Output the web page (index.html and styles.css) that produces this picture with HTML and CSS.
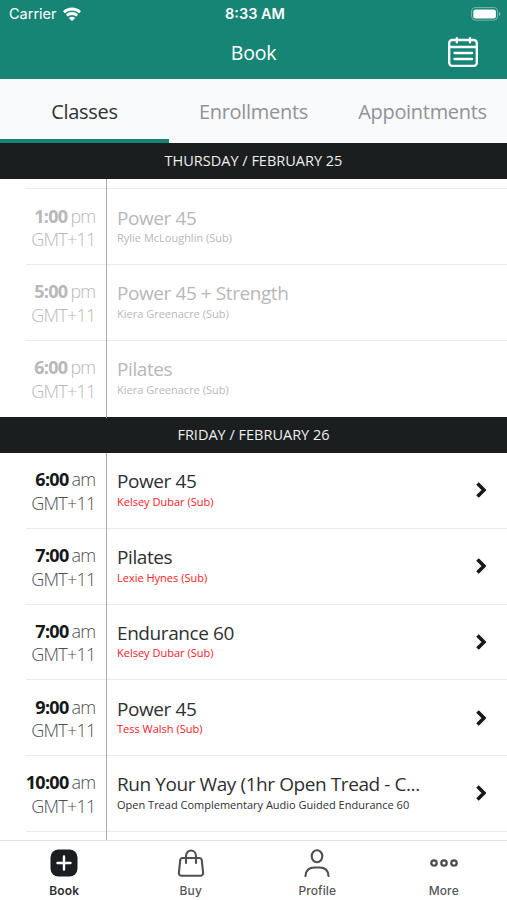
FILE: index.html
```
<!DOCTYPE html>
<html lang="en">
<head>
    <meta charset="UTF-8">
    <meta name="viewport" content="width=device-width, initial-scale=1.0">
    <title>Book</title>
    <link rel="stylesheet" href="styles.css">
</head>
<body>
    <div class="app">
        <header class="header">
            <div class="status-bar">
                <div class="carrier">
                    <span>Carrier</span>
                    <svg width="18" height="14" viewBox="0 0 18 14" fill="none" stroke="#fff" stroke-width="2.8">
                        <path d="M1 5.2C5.4.9 12.6.9 17 5.2"/>
                        <path d="M3.8 8.6c2.9-2.8 7.5-2.8 10.4 0"/>
                        <path d="M9 14L5.8 10.9c1.8-1.6 4.6-1.6 6.4 0z" fill="#fff" stroke="none"/>
                    </svg>
                </div>
                <span class="clock">8:33 AM</span>
                <svg class="battery" width="30" height="14" viewBox="0 0 30 14">
                    <rect x=".6" y=".6" width="26" height="12.6" rx="4" fill="none" stroke="#fff" stroke-opacity=".4"/>
                    <rect x="2.3" y="2.4" width="22.6" height="9" rx="2.2" fill="#fff"/>
                    <path d="M28 5v4c1.8-.7 1.8-3.3 0-4z" fill="#fff" fill-opacity=".5"/>
                </svg>
            </div>
            <div class="title-bar">
                <h1>Book</h1>
                <svg class="calendar" width="30" height="30" viewBox="0 0 30 30" fill="none" stroke="#fff" stroke-width="2.3" stroke-linecap="round">
                    <rect x="1.2" y="3" width="27.6" height="25.8" rx="3"/>
                    <path d="M1 10h28M8.8 1.2v4.2M22 1.2v4.2M6.5 16h17.6M6.5 22h17.6"/>
                </svg>
            </div>
        </header>

        <nav class="tabs">
            <a class="tab active">Classes</a>
            <a class="tab">Enrollments</a>
            <a class="tab">Appointments</a>
        </nav>

        <main class="schedule">
            <h2 class="day">THURSDAY / FEBRUARY 25</h2>
            <div class="past">
                <div class="row row-cut"><div class="time"></div></div>
                <div class="row">
                    <div class="time"><p><b>1:00</b> pm</p><p>GMT+11</p></div>
                    <div class="info"><h3>Power 45</h3><p>Rylie McLoughlin (Sub)</p></div>
                </div>
                <div class="row">
                    <div class="time"><p><b>5:00</b> pm</p><p>GMT+11</p></div>
                    <div class="info"><h3>Power 45 + Strength</h3><p>Kiera Greenacre (Sub)</p></div>
                </div>
                <div class="row">
                    <div class="time"><p><b>6:00</b> pm</p><p>GMT+11</p></div>
                    <div class="info"><h3>Pilates</h3><p>Kiera Greenacre (Sub)</p></div>
                </div>
            </div>

            <h2 class="day">FRIDAY / FEBRUARY 26</h2>
            <div class="upcoming">
                <div class="row">
                    <div class="time"><p><b>6:00</b> am</p><p>GMT+11</p></div>
                    <div class="info"><h3>Power 45</h3><p class="sub">Kelsey Dubar (Sub)</p></div>
                    <svg class="chevron" width="10" height="16" viewBox="0 0 10 16"><path d="M1.5 1.5L8 8l-6.5 6.5"/></svg>
                </div>
                <div class="row">
                    <div class="time"><p><b>7:00</b> am</p><p>GMT+11</p></div>
                    <div class="info"><h3>Pilates</h3><p class="sub">Lexie Hynes (Sub)</p></div>
                    <svg class="chevron" width="10" height="16" viewBox="0 0 10 16"><path d="M1.5 1.5L8 8l-6.5 6.5"/></svg>
                </div>
                <div class="row">
                    <div class="time"><p><b>7:00</b> am</p><p>GMT+11</p></div>
                    <div class="info"><h3>Endurance 60</h3><p class="sub">Kelsey Dubar (Sub)</p></div>
                    <svg class="chevron" width="10" height="16" viewBox="0 0 10 16"><path d="M1.5 1.5L8 8l-6.5 6.5"/></svg>
                </div>
                <div class="row">
                    <div class="time"><p><b>9:00</b> am</p><p>GMT+11</p></div>
                    <div class="info"><h3>Power 45</h3><p class="sub">Tess Walsh (Sub)</p></div>
                    <svg class="chevron" width="10" height="16" viewBox="0 0 10 16"><path d="M1.5 1.5L8 8l-6.5 6.5"/></svg>
                </div>
                <div class="row">
                    <div class="time"><p><b>10:00</b> am</p><p>GMT+11</p></div>
                    <div class="info"><h3>Run Your Way (1hr Open Tread - C...</h3><p>Open Tread Complementary Audio Guided Endurance 60</p></div>
                    <svg class="chevron" width="10" height="16" viewBox="0 0 10 16"><path d="M1.5 1.5L8 8l-6.5 6.5"/></svg>
                </div>
                <div class="row row-cut"><div class="time"></div></div>
            </div>
        </main>

        <footer class="bottom-nav">
            <a class="nav-item active">
                <svg width="28" height="28" viewBox="0 0 28 28">
                    <rect x=".5" y=".5" width="27" height="27" rx="8" fill="#1b1d20"/>
                    <path d="M14 7.5v13M7.5 14h13" stroke="#fff" stroke-width="2.4" stroke-linecap="round"/>
                </svg>
                <span>Book</span>
            </a>
            <a class="nav-item">
                <svg width="28" height="28" viewBox="0 0 28 28" fill="none" stroke="#4d4f52" stroke-width="2.1" stroke-linecap="round" stroke-linejoin="round">
                    <path d="M5.3 9h17.4c1.2 0 1.8.6 2 1.7l1.4 12.8c.2 2-.9 3.3-2.8 3.3H4.7c-1.9 0-3-1.3-2.8-3.3l1.4-12.8C3.500 9.600 4.100 9 5.300 9z"/>
                    <path d="M9 14V7c0-7.300 10-7.300 10 0v7"/>
                </svg>
                <span>Buy</span>
            </a>
            <a class="nav-item">
                <svg width="28" height="28" viewBox="0 0 28 28" fill="none" stroke="#4d4f52" stroke-width="2.1" stroke-linecap="round">
                    <ellipse cx="14" cy="7.2" rx="5.3" ry="6"/>
                    <path d="M2.5 27c.3-5.8 3.7-8.5 9-8.5h5c5.300 0 8.700 2.700 9 8.500"/>
                </svg>
                <span>Profile</span>
            </a>
            <a class="nav-item">
                <svg width="28" height="28" viewBox="0 0 28 28" fill="none" stroke="#4d4f52" stroke-width="2.3">
                    <circle cx="4" cy="14" r="2.7"/>
                    <circle cx="14" cy="14" r="2.7"/>
                    <circle cx="24" cy="14" r="2.7"/>
                </svg>
                <span>More</span>
            </a>
        </footer>
    </div>
</body>
</html>
```
FILE: styles.css
```
* {
    box-sizing: border-box;
}
body, h1, h2, h3, p {
    margin: 0;
    font-weight: 400;
}
body {
    font-family: 'Open Sans', sans-serif;
    background: #fff;
    color: #2e3032;
}
svg {
    display: block;
}
.app {
    display: flex;
    flex-direction: column;
    height: 900px;
    overflow: hidden;
}
.header {
    height: 79px;
    flex-shrink: 0;
    background: #178575;
    color: #fff;
}
.status-bar {
    display: grid;
    grid-template-columns: 1fr auto 1fr;
    align-items: center;
    height: 27px;
    padding: 0 6px 0 9px;
    font-family: Inter, sans-serif;
    font-size: 14.5px;
}
.carrier {
    display: flex;
    align-items: center;
    gap: 6px;
}
.clock {
    font-weight: 600;
}
.battery {
    justify-self: end;
}
.title-bar {
    display: grid;
    grid-template-columns: 1fr auto 1fr;
    align-items: center;
    height: 50px;
    padding-right: 29px;
    padding-left: 29px;
}
.title-bar h1 {
    grid-column: 2;
    font-size: 19.5px;
    letter-spacing: -0.2px;
}
.calendar {
    justify-self: end;
}
.tabs {
    display: grid;
    grid-template-columns: repeat(3, 1fr);
    height: 63.5px;
    flex-shrink: 0;
    background: #f8fafc;
}
.tab {
    padding-top: 19px;
    font-size: 20px;
    letter-spacing: -0.3px;
    line-height: 27px;
    text-align: center;
    color: #929298;
}
.tab.active {
    color: #303234;
    border-bottom: 4px solid #178575;
}
.schedule {
    flex: 1;
    min-height: 0;
    overflow: hidden;
}
.day {
    height: 36.5px;
    background: #1a1e1f;
    color: #eee;
    font-size: 14.5px;
    line-height: 36px;
    text-align: center;
}
.row {
    display: flex;
    height: 75.75px;
    margin-left: 26px;
    border-bottom: 1px solid #e9e9e9;
}
.past .row:last-child {
    border-bottom: none;
}
.past .row-cut,
.upcoming .row-cut {
    height: 10.25px;
}
.time {
    width: 81px;
    flex-shrink: 0;
    margin-bottom: -1px;
    padding: 15.4px 10.5px 0 0;
    border-right: 1px solid #a9a9a9;
    font-size: 18px;
    line-height: 23.5px;
    white-space: nowrap;
    color: #4c4e50;
}
.time p {
    display: flex;
    justify-content: flex-end;
    gap: 3px;
    font-family: 'Open Sans Light', 'Open Sans', sans-serif;
    font-weight: 300;
    letter-spacing: -0.75px;
}
.time b {
    font-family: 'Open Sans', sans-serif;
    font-weight: 700;
    letter-spacing: -0.7px;
    color: #16181a;
}
.row-cut .time {
    padding: 0;
}
.info {
    flex: 1;
    padding: 16.4px 0 0 10px;
}
.info h3 {
    font-size: 19px;
    letter-spacing: -0.42px;
    line-height: 25.5px;
}
.info p {
    font-size: 11px;
    line-height: 14px;
}
.info .sub {
    color: #fb2025;
}
.past .time,
.past .time b,
.past .info {
    color: #b8b8b8;
}
.chevron {
    align-self: center;
    margin-right: 21px;
    fill: none;
    stroke: #16181a;
    stroke-width: 3.6;
}
.bottom-nav {
    display: grid;
    grid-template-columns: repeat(4, 1fr);
    height: 60px;
    flex-shrink: 0;
    padding-left: 1px;
    border-top: 1px solid #e2e2e2;
    background: #fff;
}
.nav-item {
    display: flex;
    flex-direction: column;
    align-items: center;
    gap: 5px;
    padding-top: 8px;
    font-family: Inter, sans-serif;
    font-size: 12px;
    font-weight: 500;
    letter-spacing: 0.1px;
    line-height: 17px;
    color: #55575a;
}
.nav-item.active {
    color: #2b2d30;
    font-weight: 600;
}
```
